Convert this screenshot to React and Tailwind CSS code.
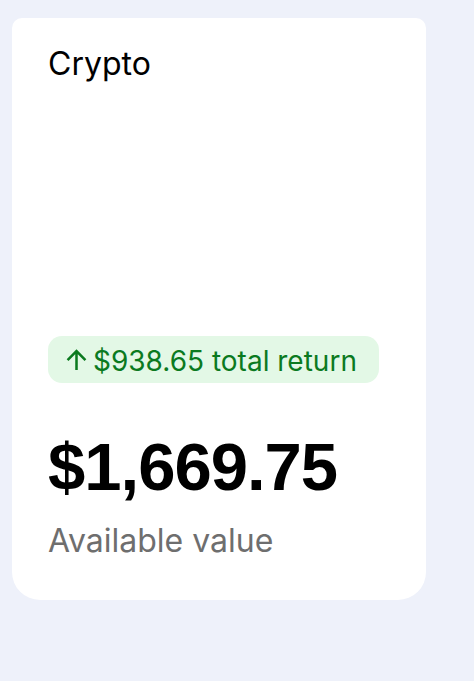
export default function App() {
  return (
    <div className="w-[474px] h-[681px] bg-[#eef1fa] pt-[18px] pl-[12px]" style={{ fontFamily: 'Inter, "Noto Sans", sans-serif' }}>
      <div className="w-[414px] h-[582px] bg-white rounded-t-[10px] rounded-b-[28px] flex flex-col pl-[36px] pr-[36px] pt-[30px] pb-[39px]">
        <div className="text-[32px] leading-[32px] text-black">Crypto</div>
        <div className="flex-1" />
        <div className="self-start flex items-center h-[47px] pl-[18px] pr-[22px] pt-[3px] rounded-[14px] bg-[#e3f8e6] text-[#0b7a1f] text-[28px] leading-[28px]">
          <svg width="21" height="21" viewBox="0 0 20 20" fill="none" stroke="currentColor" strokeWidth="2.4" strokeLinecap="butt" strokeLinejoin="miter" className="mr-[6px] -mt-[3px]">
            <path d="M10 20V2.5M1.5 10.5L10 2l8.5 8.5" />
          </svg>
          <span>$938.65 total return</span>
        </div>
        <div className="mt-[50px] text-[67px] leading-[67px] font-bold text-black tracking-[-1px]" style={{ fontFamily: '"Liberation Sans", Arial, sans-serif' }}>$1,669.75</div>
        <div className="mt-[21px] text-[32px] leading-[40px] text-[#6e6e6e]">Available value</div>
      </div>
    </div>
  );
}
